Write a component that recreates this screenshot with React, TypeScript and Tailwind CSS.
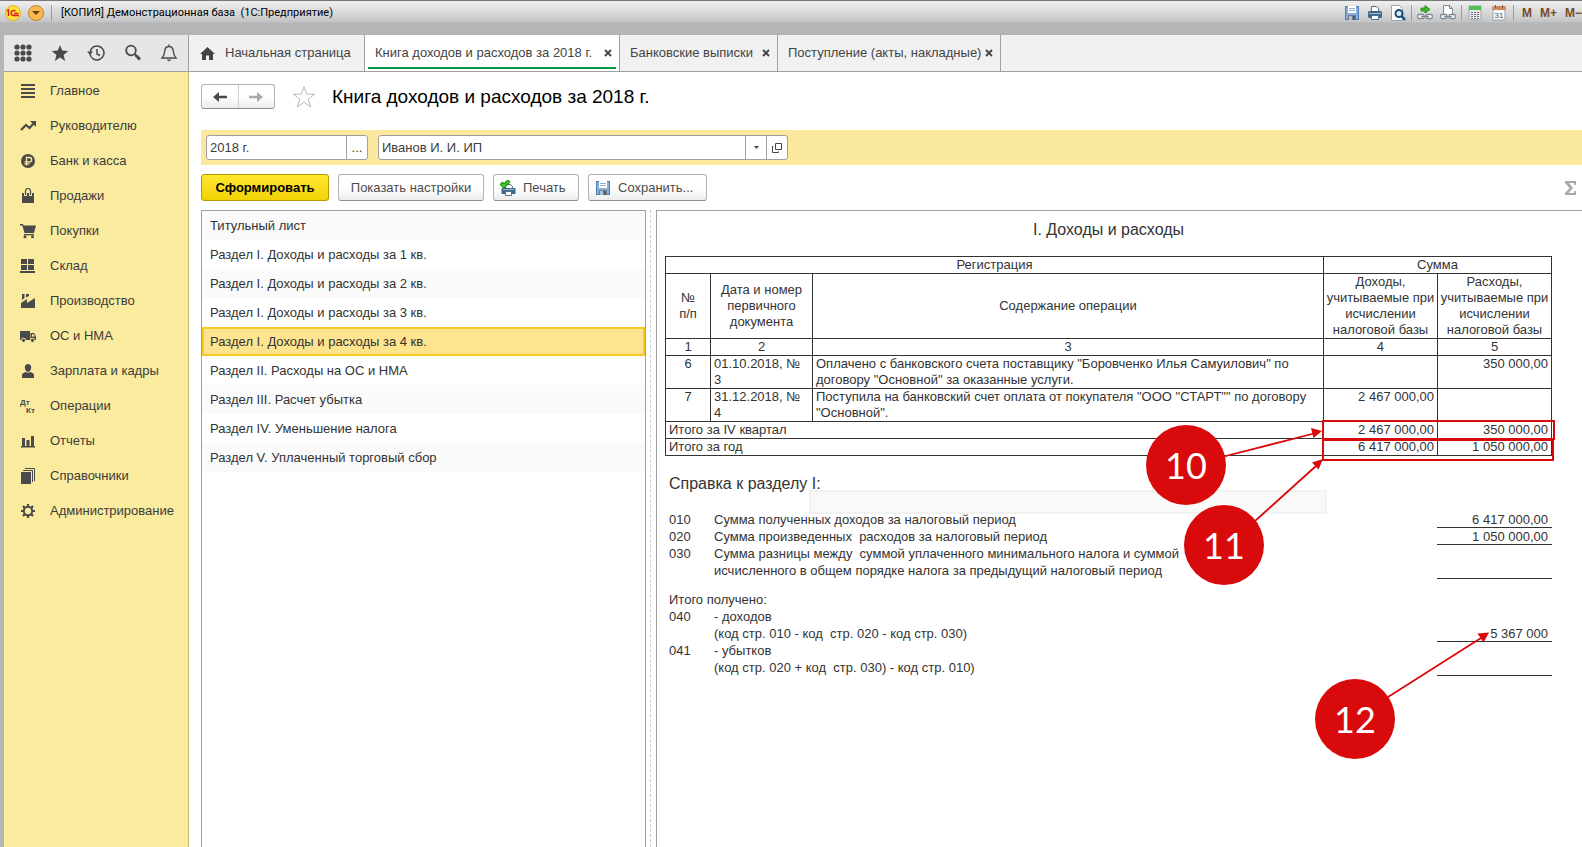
import type { ReactNode } from "react";

const Icon = ({ children, className = "" }: { children: ReactNode; className?: string }) => (
  <svg viewBox="0 0 16 16" fill="currentColor" aria-hidden="true" className={`size-4 shrink-0 ${className}`}>
    {children}
  </svg>
);

const FloppyIcon = () => (
  <Icon>
    <path d="M1 1h14v14H1z" fill="#4d7dae" />
    <path d="M2 2h12v12H2z" fill="#86aedb" />
    <path d="M4 1h8v7H4z" fill="#fff" />
    <path d="M5 3h6v1H5zM5 5h6v1H5z" fill="#8fb0d0" />
    <path d="M4 10h8v5H4z" fill="#6d7f92" />
    <path d="M5 11h3v4H5z" fill="#b5bec8" />
    <path d="M9 11h2v4H9z" fill="#4a5b6e" />
  </Icon>
);

const PrinterIcon = () => (
  <Icon>
    <path d="M4.5 1.5h5l2 2v4h-7z" fill="#fff" stroke="#50708c" />
    <rect x="1" y="6" width="14" height="7" rx="1.5" fill="#3f6788" />
    <path d="M2 8h12v1H2z" fill="#a6c4dc" />
    <path d="M4.5 10.500h7v4h-7z" fill="#fff" stroke="#50708c" />
  </Icon>
);

const PreviewIcon = () => (
  <Icon>
    <path d="M1.500.5h8l3 3v12h-11z" fill="#fff" stroke="#9aa5b0" />
    <circle cx="9" cy="8.500" r="3.500" fill="#dcebf5" stroke="#134f7c" strokeWidth="2" />
    <path d="M11.500 11l3.500 4" stroke="#134f7c" strokeWidth="2.500" />
  </Icon>
);

const Chain = () => (
  <g fill="#fff" stroke="#7f8a93" strokeWidth="1.300">
    <rect x=".7" y="9.500" width="6.300" height="4" rx="1.200" />
    <rect x="9" y="9.500" width="6.300" height="4" rx="1.200" />
    <path d="M4 11.500h8" />
  </g>
);

const LinkGoIcon = () => (
  <Icon>
    <Chain />
    <path d="M4 3h4V.5L13 4.500 8 8V6H4z" fill="#35c01f" stroke="#1c7c12" strokeWidth=".8" />
  </Icon>
);

const LinkDocIcon = () => (
  <Icon>
    <path d="M3.500.5h6l3 3v8h-9z" fill="#fff" stroke="#7f8a93" />
    <path d="M9.500.5v3h3" fill="none" stroke="#7f8a93" />
    <Chain />
  </Icon>
);

const CalculatorIcon = () => (
  <Icon>
    <path d="M2 1h12v14H2z" fill="#e9ecee" stroke="#9ea5ab" />
    <path d="M2 1h12v4H2z" fill="#4fc453" />
    <path d="M4 7h2v1H4zM7 7h2v1H7zM4 9h2v1H4zM7 9h2v1H7zM4 11h2v1H4zM7 11h2v1H7zM4 13h2v1H4zM7 13h2v1H7zM10 9h2v1h-2zM10 11h2v1h-2zM10 13h2v1h-2z" fill="#69727a" />
    <path d="M10 7h2v1h-2z" fill="#d43a2c" />
  </Icon>
);

const CalendarIcon = () => (
  <Icon>
    <path d="M2 2h12v13H2z" fill="#f6f8fa" stroke="#9ea5ab" />
    <path d="M1.500 1h13v4h-13z" fill="#c98a5c" />
    <path d="M4 0h1v3H4zM11 0h1v3h-1z" fill="#8f5a32" />
    <text x="8" y="13" textAnchor="middle" fontSize="8" fill="#46525e" className="font-['Liberation_Sans',sans-serif]">31</text>
  </Icon>
);

const PrintCheckIcon = () => (
  <Icon>
    <path d="M5.500 4.500h5l2 2v3h-7z" fill="#fff" stroke="#50708c" />
    <rect x="1.500" y="8" width="14" height="6" rx="1" fill="#3f6788" />
    <path d="M3 9h11v1H3z" fill="#8fb3d0" />
    <path d="M5.500 11.500h6v4h-6z" fill="#fff" stroke="#50708c" />
    <path d="M1 3l3 3 5-5.500" fill="none" stroke="#187c10" strokeWidth="4" />
    <path d="M1.500 3.500L4 6l4.500-5" fill="none" stroke="#3fd024" strokeWidth="2" />
  </Icon>
);

const menu: { label: string; icon: ReactNode }[] = [
  { label: "Главное", icon: <path d="M1 1h14v2H1zM1 5h14v2H1zM1 9h14v2H1zM1 13h14v2H1z" /> },
  {
    label: "Руководителю",
    icon: (
      <>
        <path d="M1 12l5-5 3.500 3L14 5" fill="none" stroke="currentColor" strokeWidth="2.200" />
        <path d="M10 3h6v6z" />
      </>
    ),
  },
  {
    label: "Банк и касса",
    icon: (
      <>
        <circle cx="8" cy="8" r="7" />
        <path d="M6.500 12.500v-8h3a2 2 0 010 4.300H4.500M4.500 10.800h5" fill="none" stroke="#faeb9e" strokeWidth="1.300" />
      </>
    ),
  },
  {
    label: "Продажи",
    icon: (
      <>
        <path d="M2 5h12v10H2z" />
        <path d="M5.500 8V3a2 2 0 015 0v5" fill="none" stroke="#faeb9e" strokeWidth="3" />
        <path d="M5.500 7V3a2.500 2.500 0 015 0v4" fill="none" stroke="currentColor" strokeWidth="1.200" />
        <path d="M2 8h12v7H2z" />
      </>
    ),
  },
  {
    label: "Покупки",
    icon: (
      <>
        <path d="M0 1h3l.5 1.500H16L14 10H4.500L2.300 2.500H0zM4 11h10v1.300H4z" />
        <circle cx="5" cy="13.700" r="1.500" />
        <circle cx="12.500" cy="13.700" r="1.500" />
      </>
    ),
  },
  { label: "Склад", icon: <path d="M1 1h6v5H1zM8 1h6v5H8zM1 7h6v5H1zM8 7h6v5H8zM0 13h15v2H0z" /> },
  { label: "Производство", icon: <path d="M1 15v-5l6-4v4l8-5v10zM2 1h2.500v4L2 7zM6 1h3v2L6 4.500z" /> },
  {
    label: "ОС и НМА",
    icon: (
      <>
        <path d="M0 3h10v9H0zM10.500 5h3.500l2 3.500V12h-5.500z" />
        <path d="M12 6.200h1.500L15 8.500h-3z" fill="#faeb9e" />
        <g stroke="#faeb9e">
          <circle cx="3.500" cy="12.300" r="2.100" />
          <circle cx="12.500" cy="12.300" r="2.100" />
        </g>
      </>
    ),
  },
  { label: "Зарплата и кадры", icon: <path d="M8 1c2 0 3.200 1.400 3.200 3.500S9.800 9 8 9 4.800 6.600 4.800 4.500 6 1 8 1zM2 15v-3c0-1.500 1.500-2.500 4-3 1 1 3 1 4 0 2.500.5 4 1.500 4 3v3z" /> },
  {
    label: "Операции",
    icon: (
      <g fontSize="8" fontWeight="bold" className="font-['Liberation_Sans',sans-serif]">
        <text x="0" y="7">Дт</text>
        <text x="6" y="15">Кт</text>
      </g>
    ),
  },
  { label: "Отчеты", icon: <path d="M1 13h14v1.500H1zM2 5h3v8H2zM6.500 7h3v6h-3zM11 3h3v10h-3z" /> },
  {
    label: "Справочники",
    icon: (
      <>
        <path d="M1 4h10v12H1z" />
        <path d="M3 2.500h9.500V14M5 .5h9.500V13" fill="none" stroke="currentColor" />
      </>
    ),
  },
  {
    label: "Администрирование",
    icon: (
      <>
        <circle cx="8" cy="8" r="4.200" fill="none" stroke="currentColor" strokeWidth="2" />
        <path d="M8 1v3M8 12v3M1 8h3M12 8h3M3 3l2 2M11 11l2 2M3 13l2-2M11 5l2-2" stroke="currentColor" strokeWidth="2.200" />
      </>
    ),
  },
];

const tabs = [
  { label: "Книга доходов и расходов за 2018 г.", width: "w-[255px]", active: true },
  { label: "Банковские выписки", width: "w-[158px]" },
  { label: "Поступление (акты, накладные)", width: "w-[223px]" },
];

const sections = [
  "Титульный лист",
  "Раздел I. Доходы и расходы за 1 кв.",
  "Раздел I. Доходы и расходы за 2 кв.",
  "Раздел I. Доходы и расходы за 3 кв.",
  "Раздел I. Доходы и расходы за 4 кв.",
  "Раздел II. Расходы на ОС и НМА",
  "Раздел III. Расчет убытка",
  "Раздел IV. Уменьшение налога",
  "Раздел V. Уплаченный торговый сбор",
];

const summary = [
  { code: "010", text: "Сумма полученных доходов за налоговый период", value: "6 417 000,00", line: true },
  { code: "020", text: "Сумма произведенных  расходов за налоговый период", value: "1 050 000,00", line: true },
  { code: "030", text: "Сумма разницы между  суммой уплаченного минимального налога и суммой" },
  { code: "", text: "исчисленного в общем порядке налога за предыдущий налоговый период", line: true },
];

const totals = [
  { code: "040", text: "- доходов" },
  { code: "", text: "(код стр. 010 - код  стр. 020 - код стр. 030)", value: "5 367 000", line: true },
  { code: "041", text: "- убытков" },
  { code: "", text: "(код стр. 020 + код  стр. 030) - код стр. 010)", line: true },
];

type Line = { code: string; text: string; value?: string; line?: boolean };

const SummaryRows = ({ rows }: { rows: Line[] }) => (
  <>
    {rows.map((r) => (
      <div key={r.text} className="flex h-[17px]">
        <span className="w-[45px] pl-1">{r.code}</span>
        <span className="flex-1 whitespace-pre pl-1">{r.text}</span>
        <span className={`w-[115px] border-b pr-1 text-right ${r.line ? "border-[#333]" : "border-transparent"}`}>{r.value}</span>
      </div>
    ))}
  </>
);

const TitleBar = () => (
  <header className="flex h-[35px] shrink-0 items-start border-t border-[#77777c] bg-linear-to-b from-[#ececec] from-5% via-[#c6c6c7] via-60% to-[#b4b5b6] to-65% pl-[5px]">
    <div className="flex h-6 items-center">
      <svg viewBox="0 0 16 16" className="size-4" aria-hidden="true">
        <circle cx="8" cy="8" r="7.500" fill="#ffe23c" stroke="#e0b52c" />
        <path d="M2 6l1.500-1V11M10.500 6.300A2.500 2.500 0 108.500 10.500H14M9 8.500h4.500" fill="none" stroke="#d6231c" strokeWidth="1.500" />
      </svg>
      <button aria-label="Главное меню" className="ml-[7px] flex size-4 items-center justify-center rounded-full border border-[#b98534] bg-[#fbb84f]">
        <svg viewBox="0 0 8 4" className="w-2" aria-hidden="true"><path d="M0 0h8L4 4z" fill="#6a4312" /></svg>
      </button>
      <span className="mx-[7px] h-4 w-px bg-[#9c9c9c]" />
      <span className="ml-[2px] whitespace-pre font-['Roboto',sans-serif] text-[11px] text-black">[КОПИЯ] Демонстрационная база  (1С:Предприятие)</span>
    </div>
    <div className="ml-auto flex h-6 items-center">
      <div className="flex gap-[7px] pr-[5px]"><FloppyIcon /><PrinterIcon /><PreviewIcon /></div>
      <div className="flex gap-[7px] border-l border-[#9c9c9c] px-[5px]"><LinkGoIcon /><LinkDocIcon /></div>
      <div className="flex gap-2 border-l border-[#9c9c9c] pl-[5px] pr-[6px]"><CalculatorIcon /><CalendarIcon /></div>
      <div className="flex gap-2 whitespace-nowrap border-l border-[#9c9c9c] pl-2 text-xs font-bold text-[#7a4a26]">
        <span>M</span><span>M+</span><span>M−</span>
      </div>
    </div>
  </header>
);

const QuickBar = () => (
  <div className="flex w-[185px] shrink-0 items-center justify-between border-r border-[#a0a0a0] bg-[#e6e6e6] px-[10px] text-[#4a4a4a]">
    <button aria-label="Меню функций">
      <svg viewBox="0 0 18 18" fill="currentColor" className="size-[18px]" aria-hidden="true">
        {[3, 9, 15].flatMap((y) => [3, 9, 15].map((x) => <circle key={`${x}-${y}`} cx={x} cy={y} r="2.600" />))}
      </svg>
    </button>
    <button aria-label="Избранное">
      <svg viewBox="0 0 18 18" fill="currentColor" className="size-[18px]" aria-hidden="true"><path d="M9 1l2.200 5.600 6 .4-4.600 3.900L14.100 17 9 13.600 3.900 17l1.500-6.100L.8 7l6-.4z" /></svg>
    </button>
    <button aria-label="История">
      <svg viewBox="0 0 18 18" fill="none" stroke="currentColor" strokeWidth="1.500" className="size-[18px]" aria-hidden="true">
        <path d="M3 10a7 7 0 102-6M3.300 10V8A7 7 0 016 3.200M10 5v5l3 1.500" />
        <path d="M0 7.500h6l-3 3.500z" fill="currentColor" stroke="none" />
      </svg>
    </button>
    <button aria-label="Поиск">
      <svg viewBox="0 0 18 18" fill="none" stroke="currentColor" className="size-[18px]" aria-hidden="true">
        <circle cx="7" cy="6.500" r="4.800" strokeWidth="1.800" />
        <path d="M10.500 10l2 2" strokeWidth="1.800" /><path d="M12 11.500l4 4" strokeWidth="3" />
      </svg>
    </button>
    <button aria-label="Оповещения">
      <svg viewBox="0 0 18 18" fill="none" stroke="currentColor" strokeWidth="1.400" className="size-[18px]" aria-hidden="true">
        <path d="M2 14c2-2 2.500-4 2.700-7C5 4 7 2.500 9 2.500S13 4 13.300 7c.2 3 .7 5 2.700 7zM9 .5v2" />
        <path d="M6.500 15.500h5L9 17.500z" fill="currentColor" stroke="none" />
      </svg>
    </button>
  </div>
);

const Tabs = () => (
  <nav className="flex flex-1 bg-[#f1f1f1] text-[#444]">
    <a href="#home" className="flex w-[176px] items-center gap-[10px] whitespace-nowrap border-r border-[#a0a0a0] pl-[11px]">
      <svg viewBox="0 0 15 13" fill="currentColor" className="w-[15px]" aria-hidden="true"><path d="M7.500 0L15 7h-2v6H9V8.500H6V13H2V7H0z" /></svg>
      Начальная страница
    </a>
    {tabs.map((t) => (
      <div key={t.label} className={`relative flex items-center justify-between whitespace-nowrap border-r border-[#a0a0a0] pl-[10px] pr-[7px] ${t.width} ${t.active ? "bg-white" : ""}`}>
        <a href="#tab">{t.label}</a>
        <button aria-label="Закрыть">
          <svg viewBox="0 0 8 8" className="size-2" aria-hidden="true"><path d="M1 1l6 6M7 1L1 7" stroke="#444" strokeWidth="1.800" /></svg>
        </button>
        {t.active && <span className="absolute inset-x-[3px] bottom-[2px] h-[2px] bg-[#009646]" />}
      </div>
    ))}
  </nav>
);

const toolButton = "flex h-[27px] items-center rounded-[3px] border border-[#b3b3b3] border-b-[#8f8f8f] bg-linear-to-b from-white from-50% to-[#ececec] text-[#4d4d4d]";

const Report = () => (
  <section className="relative flex-1 border-l border-t border-[#a0a0a0] pl-2 pr-[30px] text-[#333]">
    <h2 className="mt-[9px] text-center text-base leading-5">I. Доходы и расходы</h2>
    <table className="mt-4 w-full table-fixed border-collapse leading-4 [&_td]:border [&_td]:border-[#333] [&_td]:p-0 [&_td]:px-[3px] [&_th]:border [&_th]:border-[#333] [&_th]:p-0 [&_th]:font-normal">
      <colgroup>
        <col className="w-[45px]" /><col className="w-[102px]" /><col /><col className="w-[114px]" /><col className="w-[114px]" />
      </colgroup>
      <thead>
        <tr><th colSpan={3}>Регистрация</th><th colSpan={2}>Сумма</th></tr>
        <tr>
          <th>№<br />п/п</th>
          <th>Дата и номер<br />первичного<br />документа</th>
          <th>Содержание операции</th>
          <th>Доходы,<br />учитываемые при<br />исчислении<br />налоговой базы</th>
          <th>Расходы,<br />учитываемые при<br />исчислении<br />налоговой базы</th>
        </tr>
        <tr><th>1</th><th>2</th><th>3</th><th>4</th><th>5</th></tr>
      </thead>
      <tbody>
        <tr className="align-top">
          <td className="text-center">6</td>
          <td>01.10.2018, №<br />3</td>
          <td>Оплачено с банковского счета поставщику "Боровченко Илья Самуилович" по<br />договору "Основной" за оказанные услуги.</td>
          <td />
          <td className="text-right">350 000,00</td>
        </tr>
        <tr className="align-top">
          <td className="text-center">7</td>
          <td>31.12.2018, №<br />4</td>
          <td>Поступила на банковский счет оплата от покупателя "ООО "СТАРТ"" по договору<br />"Основной".</td>
          <td className="text-right">2 467 000,00</td>
          <td />
        </tr>
        <tr><td colSpan={3}>Итого за IV квартал</td><td className="text-right">2 467 000,00</td><td className="text-right">350 000,00</td></tr>
        <tr><td colSpan={3}>Итого за год</td><td className="text-right">6 417 000,00</td><td className="text-right">1 050 000,00</td></tr>
      </tbody>
    </table>

    <h3 className="mt-[18px] pl-1 text-base leading-5">Справка к разделу I:</h3>
    <div className="mt-[17px] leading-[17px]">
      <SummaryRows rows={summary} />
      <p className="mt-3 pl-1">Итого получено:</p>
      <SummaryRows rows={totals} />
    </div>

    <Callouts />
  </section>
);

// Step markers pinned to the amount columns on the right side of the report
const Callouts = () => (
  <>
    <div className="absolute right-[255px] top-[279px] h-6 w-[518px] border-2 border-[#f2f2f2] bg-[#f9f9f9]" />
    <div className="absolute right-[27px] top-[209px] h-5 w-[233px] border-2 border-[#d90a0c]" />
    <div className="absolute right-7 top-[228px] h-[22px] w-[232px] border-2 border-[#d90a0c]" />
    <svg viewBox="0 0 440 360" className="absolute right-0 top-[189px] h-[360px] w-[440px]" aria-hidden="true">
      <path d="M80 57L172 33.500M113 121L174 66M246 297L339 238" stroke="#d90a0c" strokeWidth="1.800" />
      <path d="M180 31l-11-3 2.500 10zM181 59l-11 3.500 6.500 7zM347 232.500l-11.500 1 6 9z" fill="#d90a0c" />
    </svg>
    <Marker className="right-[356px] top-[214px]">10</Marker>
    <Marker className="right-[318px] top-[294px]">11</Marker>
    <Marker className="right-[187px] top-[468px]">12</Marker>
  </>
);

const Marker = ({ className, children }: { className: string; children: ReactNode }) => (
  <span className={`absolute flex size-20 items-center justify-center rounded-full bg-[#d90a0c] font-['Lato',sans-serif] text-4xl text-white ${className}`}>
    {children}
  </span>
);

export default function App() {
  return (
    <div className="flex min-h-screen flex-col overflow-hidden bg-white font-['Liberation_Sans',Arial,sans-serif] text-[13px] leading-4 text-[#3c3c3c]">
      <TitleBar />
      <div className="flex flex-1 flex-col border-l-4 border-[#b5b5b7]">
        <div className="flex h-[37px] border-b border-[#a0a0a0]">
          <QuickBar />
          <Tabs />
        </div>

        <div className="flex flex-1">
          <aside className="w-[185px] shrink-0 border-r border-[#c6b87c] bg-[#faeb9e] pt-[1px]">
            {menu.map((m) => (
              <a key={m.label} href="#section" className="flex h-[35px] items-center gap-[14px] whitespace-nowrap pl-4">
                <Icon className="text-[#4a4a4a]">{m.icon}</Icon>
                {m.label}
              </a>
            ))}
          </aside>

          <main className="flex min-w-0 flex-1 flex-col pl-3 pt-3">
            <div className="flex h-[25px] items-center">
              <div className="flex h-[25px] w-[74px] rounded-[3px] border border-[#b3b3b3] border-b-[#8f8f8f] bg-linear-to-b from-white from-50% to-[#ececec]">
                <button aria-label="Назад" className="flex flex-1 items-center justify-center border-r border-[#d0d0d0] text-[#4a4a4a]">
                  <svg viewBox="0 0 14 10" className="w-[14px]" aria-hidden="true"><path d="M0 5l6-5v3.800h8v2.400H6V10z" fill="currentColor" /></svg>
                </button>
                <button aria-label="Вперед" className="flex flex-1 items-center justify-center text-[#aaa]">
                  <svg viewBox="0 0 14 10" className="w-[14px]" aria-hidden="true"><path d="M14 5L8 0v3.800H0v2.400h8V10z" fill="currentColor" /></svg>
                </button>
              </div>
              <button aria-label="В избранное" className="ml-[17px]">
                <svg viewBox="0 0 24 24" className="size-6" fill="none" stroke="#b8bcc0" aria-hidden="true"><path d="M12 1.500l2.600 7.700 8.200.1-6.600 4.800 2.400 7.900-6.600-4.800L5.400 22l2.400-7.900-6.600-4.800 8.200-.1z" /></svg>
              </button>
              <h1 className="ml-4 text-[19px] text-black">Книга доходов и расходов за 2018 г.</h1>
            </div>

            <div className="mt-[21px] flex h-[35px] items-center gap-[10px] bg-[#fce9a0] pl-[5px]">
              <div className="flex h-[25px] w-[162px] rounded-[3px] border border-[#a0a0a0] bg-white">
                <input aria-label="Период" defaultValue="2018 г." className="min-w-0 flex-1 px-[3px]" />
                <button aria-label="Выбрать период" className="w-[21px] border-l border-[#a0a0a0]">...</button>
              </div>
              <div className="flex h-[25px] w-[410px] rounded-[3px] border border-[#a0a0a0] bg-white">
                <input aria-label="Организация" defaultValue="Иванов И. И. ИП" className="min-w-0 flex-1 px-[3px]" />
                <button aria-label="Список организаций" className="flex w-[21px] items-center justify-center border-l border-[#a0a0a0]">
                  <svg viewBox="0 0 5 3" className="w-[5px]" aria-hidden="true"><path d="M0 0h5L2.500 3z" fill="#444" /></svg>
                </button>
                <button aria-label="Открыть" className="flex w-[21px] items-center justify-center border-l border-[#a0a0a0]">
                  <svg viewBox="0 0 10 10" className="size-[10px]" fill="none" stroke="#444" aria-hidden="true"><path d="M3.500.5h6v6h-6zM1.500 3.500h-1v6h6v-1" /></svg>
                </button>
              </div>
            </div>

            <div className="mt-[9px] flex items-center gap-[9px]">
              <button className="h-[27px] w-32 rounded-[3px] border border-[#b39b00] bg-linear-to-b from-[#ffe72e] to-[#f2d300] font-bold text-black">Сформировать</button>
              <button className={`${toolButton} w-[146px] justify-center`}>Показать настройки</button>
              <button className={`${toolButton} w-[86px] gap-[7px] pl-[6px]`}><PrintCheckIcon />Печать</button>
              <button className={`${toolButton} w-[119px] gap-[7px] pl-[6px]`}><FloppyIcon />Сохранить...</button>
              <button aria-label="Сумма" className="ml-auto mr-[6px] text-[#a8a8a8]">
                <svg viewBox="0 0 11 14" className="w-[11px]" aria-hidden="true"><path d="M0 0h11v4H9.500L9 2H4l4 5-4.500 5H9l.5-2H11v4H0v-2l4.500-5L0 2z" fill="currentColor" /></svg>
              </button>
            </div>

            <div className="mt-[9px] flex flex-1">
              <ul className="w-[445px] shrink-0 border border-b-0 border-[#a0a0a0] text-[#333]">
                {sections.map((s, i) => (
                  <li key={s} className={i % 2 === 0 ? "bg-[#fafafa]" : ""}>
                    <button className={`h-[29px] w-full text-left ${i === 4 ? "border-2 border-[#f9c920] bg-[#fee48e] px-[6px]" : "px-2"}`}>{s}</button>
                  </li>
                ))}
              </ul>
              <div className="ml-1 mr-[5px] w-px border-l border-dashed border-[#d0d0d0]" />
              <Report />
            </div>
          </main>
        </div>
      </div>
    </div>
  );
}
